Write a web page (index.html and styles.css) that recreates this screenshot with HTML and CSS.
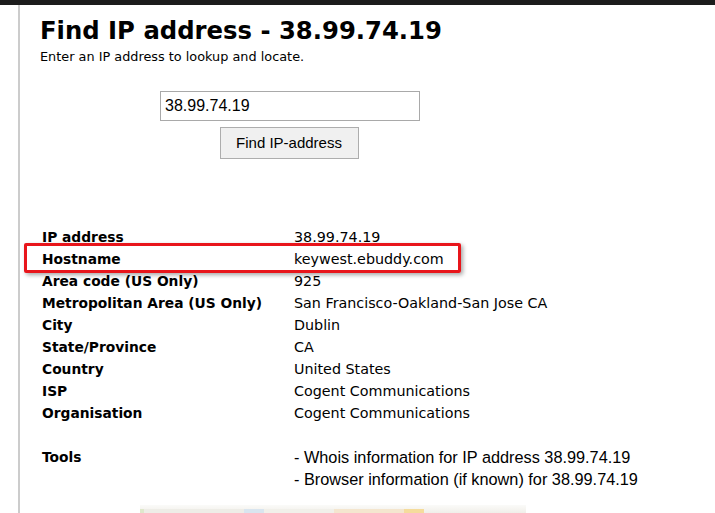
FILE: index.html
```html
<!DOCTYPE html>
<html>
<head>
<meta charset="utf-8">
<link rel="stylesheet" href="styles.css">
</head>
<body>
<div class="topbar"></div>
<div class="page">
  <h1 class="title">Find IP address - 38.99.74.19</h1>
  <p class="subtitle">Enter an IP address to lookup and locate.</p>
  <form class="lookup">
    <input class="ip-input" type="text" value="38.99.74.19">
    <button class="find-btn" type="button">Find IP-address</button>
  </form>
  <div class="info">
    <div class="row"><span class="label">IP address</span><span class="value">38.99.74.19</span></div>
    <div class="row highlight"><span class="label">Hostname</span><span class="value">keywest.ebuddy.com</span></div>
    <div class="row"><span class="label">Area code (US Only)</span><span class="value">925</span></div>
    <div class="row"><span class="label">Metropolitan Area (US Only)</span><span class="value">San Francisco-Oakland-San Jose CA</span></div>
    <div class="row"><span class="label">City</span><span class="value">Dublin</span></div>
    <div class="row"><span class="label">State/Province</span><span class="value">CA</span></div>
    <div class="row"><span class="label">Country</span><span class="value">United States</span></div>
    <div class="row"><span class="label">ISP</span><span class="value">Cogent Communications</span></div>
    <div class="row"><span class="label">Organisation</span><span class="value">Cogent Communications</span></div>
    <div class="row spacer"></div>
    <div class="row"><span class="label">Tools</span><span class="value tool">- Whois information for IP address 38.99.74.19</span></div>
    <div class="row"><span class="label"></span><span class="value tool">- Browser information (if known) for 38.99.74.19</span></div>
  </div>
  <div class="map">
    <span class="map-seg s1"></span><span class="map-seg s2"></span><span class="map-seg s3"></span><span class="map-seg s4"></span><span class="map-seg s5"></span><span class="map-seg s6"></span>
  </div>
</div>
</body>
</html>
```

FILE: styles.css
```css
html, body {
  margin: 0;
  padding: 0;
  background: #ffffff;
  height: 100%;
  overflow: hidden;
}
body {
  font-family: "DejaVu Sans", Verdana, sans-serif;
  color: #000;
}
.topbar {
  height: 5px;
  background: #1c1c1c;
}
.page {
  margin-left: 18px;
  border-left: 2px solid #cccccc;
  padding-left: 20px;
  height: 508px;
  box-sizing: border-box;
  padding-top: 12px;
}
.title {
  margin: 0;
  font-size: 24.3px;
  line-height: 28px;
  font-weight: bold;
}
.subtitle {
  margin: 4px 0 0 0;
  font-size: 12.85px;
  line-height: 16px;
}
.lookup {
  margin: 26px 0 0 120px;
  width: 260px;
  display: flex;
  flex-direction: column;
  align-items: center;
  gap: 6px;
}
.ip-input {
  box-sizing: border-box;
  width: 260px;
  height: 30px;
  border: 1px solid #a9a9a9;
  padding: 0 4px;
  font-family: "Liberation Sans", Arial, sans-serif;
  font-size: 16px;
  color: #000;
  outline: none;
}
.find-btn {
  box-sizing: border-box;
  width: 139px;
  height: 32px;
  margin-left: -2px;
  padding: 0 0 2px 0;
  background: #f0f0f0;
  border: 1px solid #adadad;
  border-radius: 0;
  font-family: "Liberation Sans", Arial, sans-serif;
  font-size: 15px;
  color: #000;
}
.info {
  margin-top: 67px;
  padding-left: 2px;
}
.row {
  display: grid;
  grid-template-columns: 252px 1fr;
  height: 22px;
  align-items: center;
  position: relative;
}
.label {
  font-weight: bold;
  font-size: 13.8px;
}
.value {
  font-size: 14.3px;
}
.value.tool {
  font-family: "Liberation Sans", Arial, sans-serif;
  font-size: 16.3px;
}
.highlight::after {
  content: "";
  position: absolute;
  left: -18px;
  top: -5px;
  width: 437px;
  height: 30px;
  box-sizing: border-box;
  border: 3px solid #e8151b;
  border-radius: 2px;
  box-shadow: 2px 2px 4px rgba(0, 0, 0, 0.35);
}
.map {
  margin: 15px 0 0 100px;
  width: 386px;
  height: 8px;
  display: flex;
  align-items: flex-end;
  background: linear-gradient(#fbfbf9, #f0efe9);
}
.map-seg { height: 4px; }
.s1 { width: 4px; background: #dfe8cc; }
.s2 { width: 100px; background: #eeede7; }
.s3 { width: 20px; background: #d9e5ef; }
.s4 { width: 70px; background: #f1f0ea; }
.s5 { width: 70px; background: #f4e6cf; }
.s6 { width: 20px; background: #f5dc9c; }
```
